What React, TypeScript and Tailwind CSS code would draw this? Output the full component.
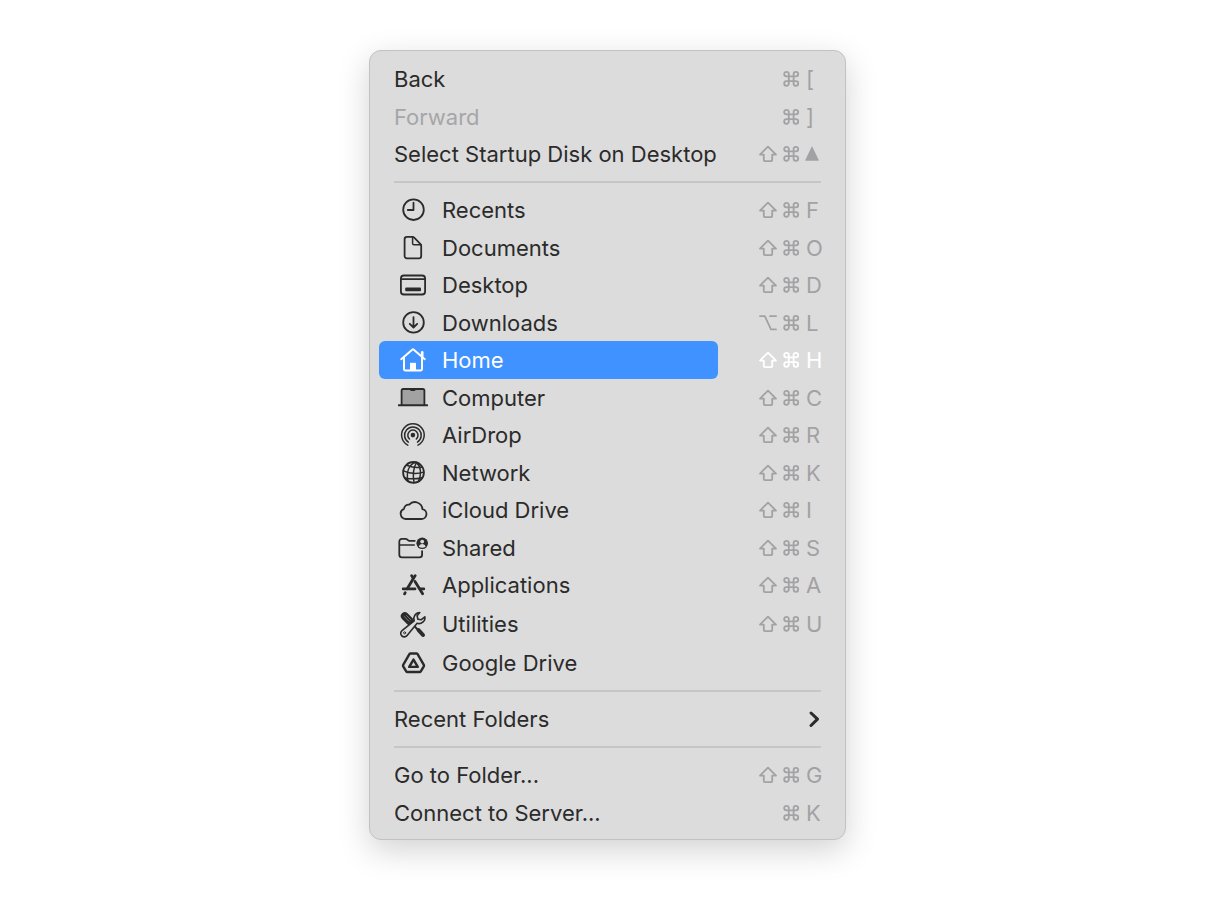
import { useState } from "react";
import type { ReactNode } from "react";
import clsx from "clsx";

type Key = "shift" | "option" | "command";

interface IMenuItem {
  label: string;
  icon?: ReactNode;
  keys?: Key[];
  letter?: ReactNode;
  disabled?: boolean;
  submenu?: boolean;
  tall?: boolean;
}

function Glyph({ children }: { children: ReactNode }) {
  return (
    <svg
      viewBox="0 0 30 30"
      className="size-[30px] shrink-0"
      fill="none"
      stroke="currentColor"
      strokeWidth="1.8"
      strokeLinecap="round"
      strokeLinejoin="round"
      aria-hidden="true"
    >
      {children}
    </svg>
  );
}

const keyPaths: Record<Key, string> = {
  shift: "M9 1.6 1 9.6H4.8V15a1.1 1.1 0 0 0 1.1 1.1H12.1A1.100 1.100 0 0 0 13.200 15V9.600H17Z",
  option: "M1 2.200H5.800L12 15.400H17M11 2.200H17",
  command:
    "M6.800 6.600V4.100A2.300 2.300 0 1 0 4.500 6.400H13.900A2.300 2.300 0 1 0 11.600 4.100V13.500A2.300 2.300 0 1 0 13.900 11.200H4.500A2.300 2.300 0 1 0 6.800 13.500Z",
};

function KeyGlyph({ name }: { name: Key }) {
  return (
    <svg
      viewBox="0 0 18 18"
      className={clsx("size-[18px]", name === "command" && "col-start-2")}
      fill="none"
      stroke="currentColor"
      strokeWidth="1.8"
      strokeLinecap="round"
      strokeLinejoin="round"
      role="img"
      aria-label={name}
    >
      <path d={keyPaths[name]} />
    </svg>
  );
}

const triangle = (
  <svg viewBox="0 0 14 18" className="h-[18px] w-[14px]" fill="currentColor" role="img" aria-label="up">
    <path d="M6.4 2.200c.3-.6.900-.6 1.200 0l6 12.600c.2.500 0 1-.6 1H1c-.6 0-.8-.5-.6-1Z" />
  </svg>
);

const RecentsIcon = (
  <Glyph>
    <circle cx="15.5" cy="14.7" r="10.3" />
    <path d="M15.5 7.7V15H9.8" />
  </Glyph>
);

const DocumentIcon = (
  <Glyph>
    <path d="M9 3.800h5.4c.7 0 1.3.3 1.8.8l6.3 6.5c.5.5.7 1.1.7 1.8v10c0 1.5-.9 2.4-2.4 2.4H9c-1.5 0-2.4-.9-2.4-2.4V6.2c0-1.5.9-2.4 2.4-2.4Z" />
    <path d="M14.6 4.100v6.3c0 .9.5 1.4 1.4 1.4h7" strokeWidth="1.5" />
  </Glyph>
);

const DesktopIcon = (
  <Glyph>
    <rect x="2.9" y="5.5" width="24.2" height="19" rx="3" />
    <path d="M3 9.2h24" strokeWidth="1.8" />
    <rect x="7.2" y="17.6" width="15.8" height="3.6" rx="1" fill="currentColor" stroke="none" />
  </Glyph>
);

const DownloadsIcon = (
  <Glyph>
    <circle cx="15.5" cy="14.4" r="10.3" />
    <path d="M15.5 9.200v10M11.8 15.8l3.7 3.7 3.7-3.7" />
  </Glyph>
);

const HomeIcon = (
  <Glyph>
    <path d="M3.2 14.2 14.2 4.7c.5-.4 1.1-.4 1.6 0L26.8 14.2" strokeWidth="2" />
    <path d="M24.2 7.2v4.200" strokeWidth="2.6" />
    <path d="M6 12.5v11.3c0 1 .6 1.6 1.6 1.6h14.8c1 0 1.6-.6 1.6-1.6V12.5" strokeWidth="2" />
    <path d="M12 25v-7.2h6V25Z" fill="currentColor" stroke="none" />
  </Glyph>
);

const ComputerIcon = (
  <Glyph>
    <path d="M3.6 22V7.600c0-1 .6-1.6 1.6-1.6h19.6c1 0 1.6.6 1.6 1.6v14.400" fill="#a2a2a2" />
    <path d="M12.5 6.200h5l-.6 1.3h-3.8Z" fill="currentColor" strokeWidth="1" />
    <path d="M0.800 22.300h28.400" strokeWidth="2" />
  </Glyph>
);

const AirDropIcon = (
  <Glyph>
    <g strokeWidth="1.5">
      <path d="M9.8 25.1a11.3 11.3 0 1 1 10.2 0" />
      <path d="M10.3 22.1a8.3 8.3 0 1 1 9.2 0" />
      <path d="M11.5 19a5.1 5.1 0 1 1 6.8 0" />
    </g>
    <circle cx="14.9" cy="15.1" r="2.3" fill="currentColor" stroke="none" />
  </Glyph>
);

const NetworkIcon = (
  <Glyph>
    <circle cx="15.5" cy="14.4" r="10.4" />
    <g strokeWidth="1.5">
      <path d="M18.500 4.500C15.800 9.200 14.600 16.700 16 24.700" />
      <path d="M17.500 4.200C11 6.700 8.200 13.700 9.800 22.700" />
      <path d="M18.500 4.400c4.600 4.500 5.200 12 2 19" />
      <path d="M8.600 7.200c5 2 10.500 3 15.200 1.800" />
      <path d="M5.200 12.900c6.500 2.800 14 3.200 20.500 1.200" />
      <path d="M7 19.900c5 1.200 11.500 1.200 16.800-.2" />
    </g>
  </Glyph>
);

const CloudIcon = (
  <Glyph>
    <path d="M7.5 24A5.3 5.3 0 0 1 6 13.8 4.6 4.6 0 0 1 11.2 9.6 7.6 7.6 0 0 1 24.4 14.1 5 5 0 0 1 23.2 24Z" />
  </Glyph>
);

const SharedIcon = (
  <Glyph>
    <path d="M16.8 7.800h-5.4c-.7 0-1-.2-1.5-.7l-.7-.6c-.5-.5-1-.7-1.7-.7H4c-1.7 0-2.7 1-2.7 2.7v13.2c0 1.7 1 2.7 2.7 2.7h17.4c1.7 0 2.7-1 2.7-2.7v-3.6" />
    <path d="M1.5 12h15.300" strokeWidth="1.5" strokeLinecap="butt" />
    <circle cx="24.200" cy="10.300" r="5.800" fill="currentColor" stroke="none" />
    <circle cx="24.200" cy="8.600" r="1.900" fill="#dcdcdc" stroke="none" />
    <path d="M20.800 13.800c.5-2 1.800-2.800 3.400-2.800s2.900.8 3.400 2.800c-2 1.400-4.800 1.400-6.800 0Z" fill="#dcdcdc" stroke="none" />
  </Glyph>
);

const ApplicationsIcon = (
  <Glyph>
    <g strokeWidth="2.8">
      <path d="M17.200 5.600 9.200 18.800" />
      <path d="M13.600 5.600 15.200 8.300" />
      <path d="M17 11.500 24.600 23.800" />
      <path d="M5.200 18.900H17M22.600 18.900H25.800" />
      <path d="M7.200 22.800 6.500 23.900" />
    </g>
  </Glyph>
);

const UtilitiesIcon = (
  <Glyph>
    <path d="M6.800 7.200 12 12.400" strokeWidth="8" />
    <path d="M12 12.500 21 22" strokeWidth="2" />
    <path d="M20.500 21 25 26" strokeWidth="4" />
    <path d="M6.400 7.600 11 12.200M8.500 6.500 12.800 10.800" stroke="#8a8a8a" strokeWidth=".8" />
    <path
      d="M21.800 3.600a6 6 0 0 0-5.600 8.200L4.300 21.300a3.600 3.600 0 1 0 5 5L19.100 14.300a6 6 0 0 0 7.800-6.500l-3.600 2.900-3.400-.5-.8-3.400Z"
      fill="#dcdcdc"
      strokeWidth="1.6"
    />
    <circle cx="6.600" cy="23.800" r="1" strokeWidth="1" />
  </Glyph>
);

const GoogleDriveIcon = (
  <Glyph>
    <g strokeWidth="2.4">
      <path d="M12.600 5.500h5.800c.5 0 .9.200 1.200.7l6.200 10.600c.3.500.3 1 0 1.500l-3 5c-.3.500-.7.700-1.200.7H9.400c-.5 0-.9-.2-1.200-.7l-3-5c-.3-.5-.3-1 0-1.500L11.400 6.200c.3-.5.7-.7 1.200-.7Z" />
      <path d="M15.500 11.600 19.800 18.900H11.200Z" />
    </g>
  </Glyph>
);

const go: Key[] = ["shift", "command"];

const groups: IMenuItem[][] = [
  [
    { label: "Back", keys: ["command"], letter: "[" },
    { label: "Forward", keys: ["command"], letter: "]", disabled: true },
    { label: "Select Startup Disk on Desktop", keys: go, letter: triangle },
  ],
  [
    { label: "Recents", icon: RecentsIcon, keys: go, letter: "F" },
    { label: "Documents", icon: DocumentIcon, keys: go, letter: "O" },
    { label: "Desktop", icon: DesktopIcon, keys: go, letter: "D" },
    { label: "Downloads", icon: DownloadsIcon, keys: ["option", "command"], letter: "L" },
    { label: "Home", icon: HomeIcon, keys: go, letter: "H" },
    { label: "Computer", icon: ComputerIcon, keys: go, letter: "C" },
    { label: "AirDrop", icon: AirDropIcon, keys: go, letter: "R" },
    { label: "Network", icon: NetworkIcon, keys: go, letter: "K" },
    { label: "iCloud Drive", icon: CloudIcon, keys: go, letter: "I" },
    { label: "Shared", icon: SharedIcon, keys: go, letter: "S" },
    { label: "Applications", icon: ApplicationsIcon, keys: go, letter: "A" },
    { label: "Utilities", icon: UtilitiesIcon, keys: go, letter: "U", tall: true },
    { label: "Google Drive", icon: GoogleDriveIcon, tall: true },
  ],
  [{ label: "Recent Folders", submenu: true }],
  [
    { label: "Go to Folder...", keys: go, letter: "G" },
    { label: "Connect to Server...", keys: ["command"], letter: "K" },
  ],
];

interface IMenuRowProps {
  item: IMenuItem;
  active: boolean;
  onSelect: () => void;
}

function MenuRow({ item, active, onSelect }: IMenuRowProps) {
  return (
    <button
      type="button"
      role="menuitem"
      disabled={item.disabled}
      aria-haspopup={item.submenu ? "menu" : undefined}
      onClick={onSelect}
      className={clsx(
        "flex w-full items-stretch text-left",
        item.tall ? "h-[39px]" : "odd:h-[38px] even:h-[37px]",
        active ? "text-white" : "text-[#2b2b2b]"
      )}
    >
      <span
        className={clsx(
          "flex flex-1 items-center gap-[14px] rounded-md whitespace-nowrap",
          item.icon ? "pl-[19px]" : "pl-[15px]",
          active && "bg-[#3f92ff]",
          item.disabled && "text-[#a6a6a8]"
        )}
      >
        {item.icon}
        {item.label}
      </span>
      <span
        className={clsx(
          "ml-[41px] grid w-[77px] grid-cols-[18px_18px_1fr] items-center gap-[5px]",
          !active && "text-[#a2a2a4]"
        )}
      >
        {item.keys?.map((key) => (
          <KeyGlyph key={key} name={key} />
        ))}
        {item.letter && (
          <span className={clsx("col-start-3", typeof item.letter === "string" && "pl-px")}>
            {item.letter}
          </span>
        )}
        {item.submenu && (
          <svg
            viewBox="0 0 18 18"
            className="col-start-3 size-[18px] text-[#2b2b2b]"
            fill="none"
            stroke="currentColor"
            strokeWidth="3"
            strokeLinecap="round"
            strokeLinejoin="round"
            aria-hidden="true"
          >
            <path d="M6 3 12.5 9.2 6 15.5" />
          </svg>
        )}
      </span>
    </button>
  );
}

function App() {
  const [selected, setSelected] = useState("Home");

  return (
    <main className="flex min-h-screen items-start justify-center bg-white px-4 py-[50px] font-['Inter',sans-serif] text-[22px] leading-7">
      <div
        role="menu"
        aria-label="Go"
        className="w-full max-w-[477px] rounded-xl border border-[#c2c2c5] bg-[#dcdcdc] px-[9px] pt-[9px] pb-2 shadow-[0_10px_32px_rgba(0,0,0,0.18)]"
      >
        {groups.map((group, index) => (
          <div key={group[0].label}>
            {index > 0 && (
              <div role="separator" className="mx-[15px] py-2">
                <div className="h-[2px] bg-[#c6c6c9]" />
              </div>
            )}
            <div role="group">
              {group.map((item) => (
                <MenuRow
                  key={item.label}
                  item={item}
                  active={item.label === selected}
                  onSelect={() => setSelected(item.label)}
                />
              ))}
            </div>
          </div>
        ))}
      </div>
    </main>
  );
}

export default App;
